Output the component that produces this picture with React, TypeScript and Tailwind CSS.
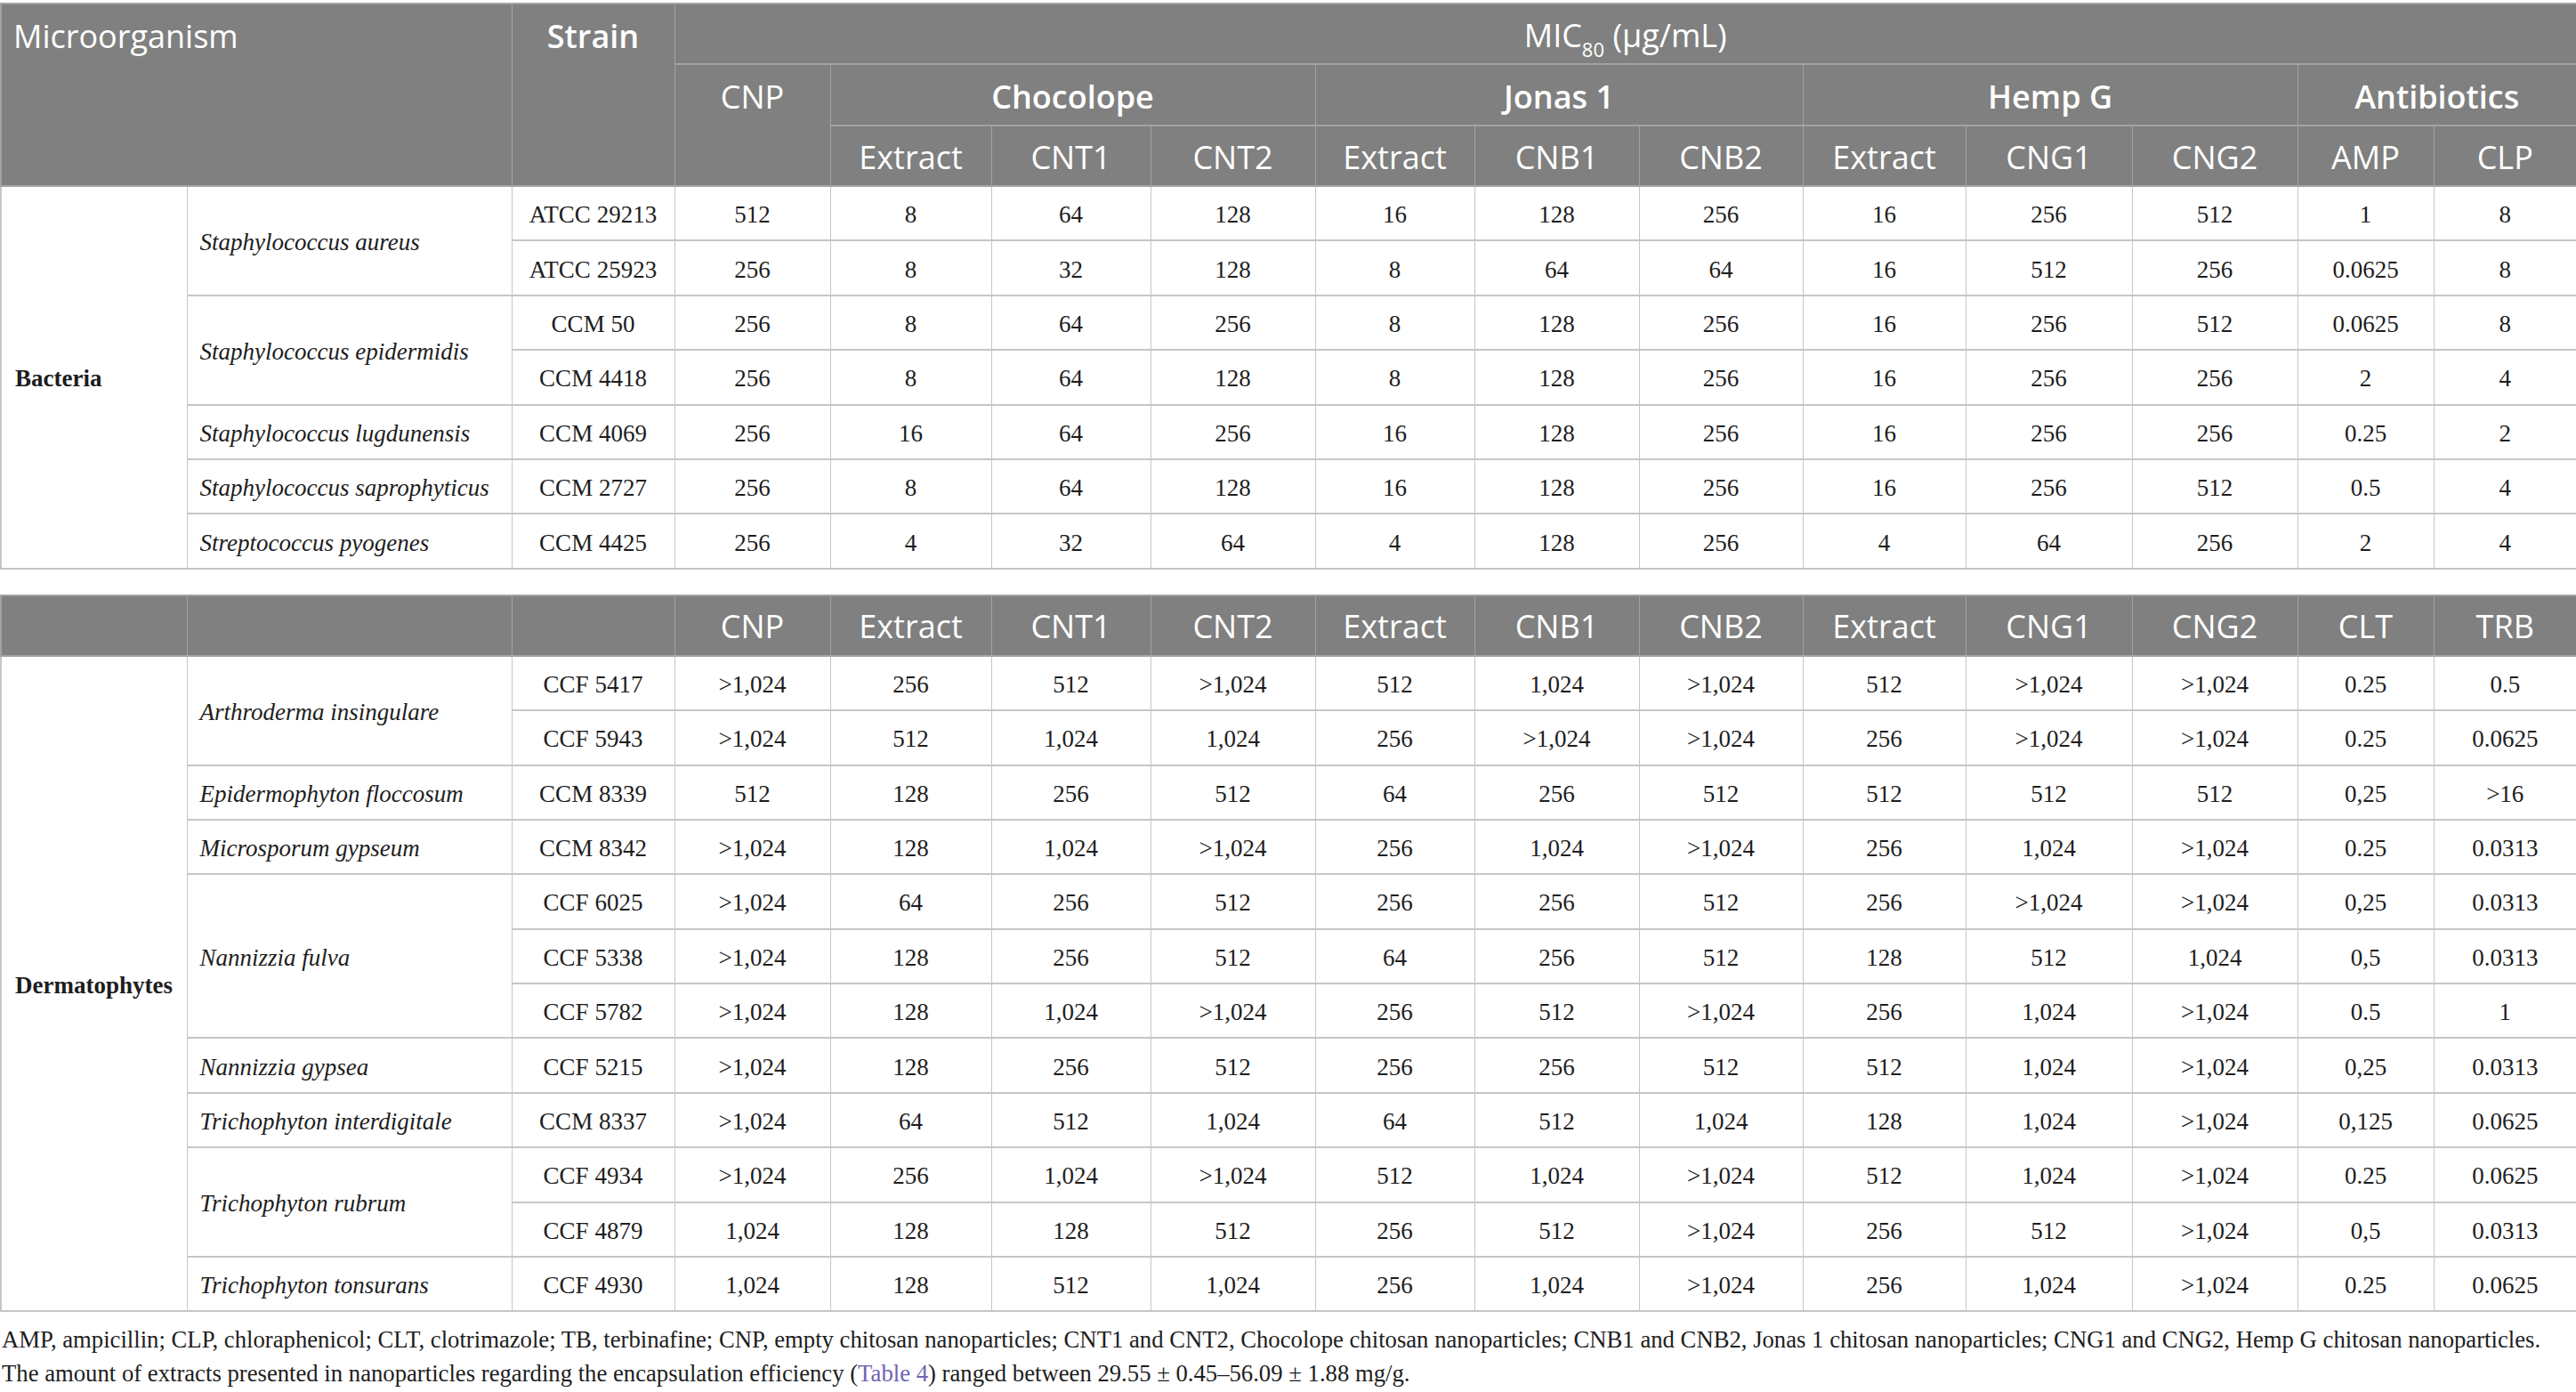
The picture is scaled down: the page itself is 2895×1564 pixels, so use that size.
import React from "react";

type Row = { group?: [string, number]; species?: [string, number]; strain: string; vals: string[] };

const bacteria: Row[] = [
  { group: ["Bacteria", 7], species: ["Staphylococcus aureus", 2], strain: "ATCC 29213", vals: ["512", "8", "64", "128", "16", "128", "256", "16", "256", "512", "1", "8"] },
  { strain: "ATCC 25923", vals: ["256", "8", "32", "128", "8", "64", "64", "16", "512", "256", "0.0625", "8"] },
  { species: ["Staphylococcus epidermidis", 2], strain: "CCM 50", vals: ["256", "8", "64", "256", "8", "128", "256", "16", "256", "512", "0.0625", "8"] },
  { strain: "CCM 4418", vals: ["256", "8", "64", "128", "8", "128", "256", "16", "256", "256", "2", "4"] },
  { species: ["Staphylococcus lugdunensis", 1], strain: "CCM 4069", vals: ["256", "16", "64", "256", "16", "128", "256", "16", "256", "256", "0.25", "2"] },
  { species: ["Staphylococcus saprophyticus", 1], strain: "CCM 2727", vals: ["256", "8", "64", "128", "16", "128", "256", "16", "256", "512", "0.5", "4"] },
  { species: ["Streptococcus pyogenes", 1], strain: "CCM 4425", vals: ["256", "4", "32", "64", "4", "128", "256", "4", "64", "256", "2", "4"] },
];

const derm: Row[] = [
  { group: ["Dermatophytes", 12], species: ["Arthroderma insingulare", 2], strain: "CCF 5417", vals: [">1,024", "256", "512", ">1,024", "512", "1,024", ">1,024", "512", ">1,024", ">1,024", "0.25", "0.5"] },
  { strain: "CCF 5943", vals: [">1,024", "512", "1,024", "1,024", "256", ">1,024", ">1,024", "256", ">1,024", ">1,024", "0.25", "0.0625"] },
  { species: ["Epidermophyton floccosum", 1], strain: "CCM 8339", vals: ["512", "128", "256", "512", "64", "256", "512", "512", "512", "512", "0,25", ">16"] },
  { species: ["Microsporum gypseum", 1], strain: "CCM 8342", vals: [">1,024", "128", "1,024", ">1,024", "256", "1,024", ">1,024", "256", "1,024", ">1,024", "0.25", "0.0313"] },
  { species: ["Nannizzia fulva", 3], strain: "CCF 6025", vals: [">1,024", "64", "256", "512", "256", "256", "512", "256", ">1,024", ">1,024", "0,25", "0.0313"] },
  { strain: "CCF 5338", vals: [">1,024", "128", "256", "512", "64", "256", "512", "128", "512", "1,024", "0,5", "0.0313"] },
  { strain: "CCF 5782", vals: [">1,024", "128", "1,024", ">1,024", "256", "512", ">1,024", "256", "1,024", ">1,024", "0.5", "1"] },
  { species: ["Nannizzia gypsea", 1], strain: "CCF 5215", vals: [">1,024", "128", "256", "512", "256", "256", "512", "512", "1,024", ">1,024", "0,25", "0.0313"] },
  { species: ["Trichophyton interdigitale", 1], strain: "CCM 8337", vals: [">1,024", "64", "512", "1,024", "64", "512", "1,024", "128", "1,024", ">1,024", "0,125", "0.0625"] },
  { species: ["Trichophyton rubrum", 2], strain: "CCF 4934", vals: [">1,024", "256", "1,024", ">1,024", "512", "1,024", ">1,024", "512", "1,024", ">1,024", "0.25", "0.0625"] },
  { strain: "CCF 4879", vals: ["1,024", "128", "128", "512", "256", "512", ">1,024", "256", "512", ">1,024", "0,5", "0.0313"] },
  { species: ["Trichophyton tonsurans", 1], strain: "CCF 4930", vals: ["1,024", "128", "512", "1,024", "256", "1,024", ">1,024", "256", "1,024", ">1,024", "0.25", "0.0625"] },
];

const sans = "font-['Open_Sans','Noto_Sans',sans-serif]";
const serif = "font-['Liberation_Serif','Times_New_Roman',serif]";

const hcell = "border-x border-y-2 border-[#a3a3a3] text-white text-[36px] font-normal leading-none";
const bcell = "border-x border-y-2 border-[#c6c6c6] text-[27px] text-[#1d1d1d] leading-none pt-[4px]";

function ColGroup() {
  return (
    <colgroup>
      <col className="w-[209px]" />
      <col className="w-[365px]" />
      <col className="w-[183px]" />
      <col className="w-[175px]" />
      <col className="w-[181px]" />
      <col className="w-[179px]" />
      <col className="w-[185px]" />
      <col className="w-[179px]" />
      <col className="w-[185px]" />
      <col className="w-[184px]" />
      <col className="w-[183px]" />
      <col className="w-[187px]" />
      <col className="w-[186px]" />
      <col className="w-[153px]" />
      <col className="w-[161px]" />
    </colgroup>
  );
}

function Body({ rows }: { rows: Row[] }) {
  return (
    <tbody className={serif}>
      {rows.map((r, i) => (
        <tr key={i} className="h-[61.4px]">
          {r.group && (
            <td rowSpan={r.group[1]} className={`${bcell} border-l-2 text-left align-middle pl-[15px] font-bold`}>
              {r.group[0]}
            </td>
          )}
          {r.species && (
            <td rowSpan={r.species[1]} className={`${bcell} text-left align-middle pl-[14px] italic`}>
              {r.species[0]}
            </td>
          )}
          <td className={`${bcell} text-center align-middle`}>{r.strain}</td>
          {r.vals.map((v, j) => (
            <td key={j} className={`${bcell} text-center align-middle ${j === 11 ? "border-r-2" : ""}`}>
              {v}
            </td>
          ))}
        </tr>
      ))}
    </tbody>
  );
}

export default function App() {
  const subCols = ["Extract", "CNT1", "CNT2", "Extract", "CNB1", "CNB2", "Extract", "CNG1", "CNG2"];
  return (
    <div className="w-[2895px] bg-white pt-[3px]">
      <table className="w-[2895px] table-fixed border-collapse">
        <ColGroup />
        <thead className={`${sans} bg-[#7f807f]`}>
          <tr className="h-[68px]">
            <th colSpan={2} rowSpan={3} className={`${hcell} border-l-2 text-left align-top pl-[13px] pt-[18px]`}>
              Microorganism
            </th>
            <th rowSpan={3} className={`${hcell} font-semibold text-center align-top pt-[18px]`}>
              Strain
            </th>
            <th colSpan={12} className={`${hcell} border-r-2 text-center align-middle pt-[3px]`}>
              MIC<sub className="text-[22px] align-[-6px]">80</sub> (µg/mL)
            </th>
          </tr>
          <tr className="h-[69px]">
            <th rowSpan={2} className={`${hcell} text-center align-top pt-[18px]`}>CNP</th>
            <th colSpan={3} className={`${hcell} font-semibold text-center align-middle pt-[4px]`}>Chocolope</th>
            <th colSpan={3} className={`${hcell} font-semibold text-center align-middle pt-[4px]`}>Jonas 1</th>
            <th colSpan={3} className={`${hcell} font-semibold text-center align-middle pt-[4px]`}>Hemp G</th>
            <th colSpan={2} className={`${hcell} border-r-2 font-semibold text-center align-middle pt-[4px]`}>Antibiotics</th>
          </tr>
          <tr className="h-[68px]">
            {subCols.map((c, i) => (
              <th key={i} className={`${hcell} text-center align-middle pt-[3px]`}>{c}</th>
            ))}
            <th className={`${hcell} text-center align-middle pt-[3px]`}>AMP</th>
            <th className={`${hcell} border-r-2 text-center align-middle pt-[3px]`}>CLP</th>
          </tr>
        </thead>
        <Body rows={bacteria} />
      </table>

      <div className="h-[28px]" />

      <table className="w-[2895px] table-fixed border-collapse">
        <ColGroup />
        <thead className={`${sans} bg-[#7f807f]`}>
          <tr className="h-[68px]">
            <th className={`${hcell} border-l-2`}></th>
            <th className={hcell}></th>
            <th className={hcell}></th>
            {["CNP", ...subCols, "CLT"].map((c, i) => (
              <th key={i} className={`${hcell} text-center align-middle pt-[3px]`}>{c}</th>
            ))}
            <th className={`${hcell} border-r-2 text-center align-middle pt-[3px]`}>TRB</th>
          </tr>
        </thead>
        <Body rows={derm} />
      </table>

      <div className={`${serif} text-[26.7px] text-[#1d1d1d] leading-[38px] pt-[12px] pl-[2px]`}>
        <p>
          AMP, ampicillin; CLP, chloraphenicol; CLT, clotrimazole; TB, terbinafine; CNP, empty chitosan nanoparticles; CNT1 and CNT2, Chocolope chitosan nanoparticles; CNB1 and CNB2, Jonas 1 chitosan nanoparticles; CNG1 and CNG2, Hemp G chitosan nanoparticles.
        </p>
        <p>
          The amount of extracts presented in nanoparticles regarding the encapsulation efficiency (<span className="text-[#6f63b6]">Table 4</span>) ranged between 29.55 ± 0.45–56.09 ± 1.88 mg/g.
        </p>
      </div>
    </div>
  );
}
